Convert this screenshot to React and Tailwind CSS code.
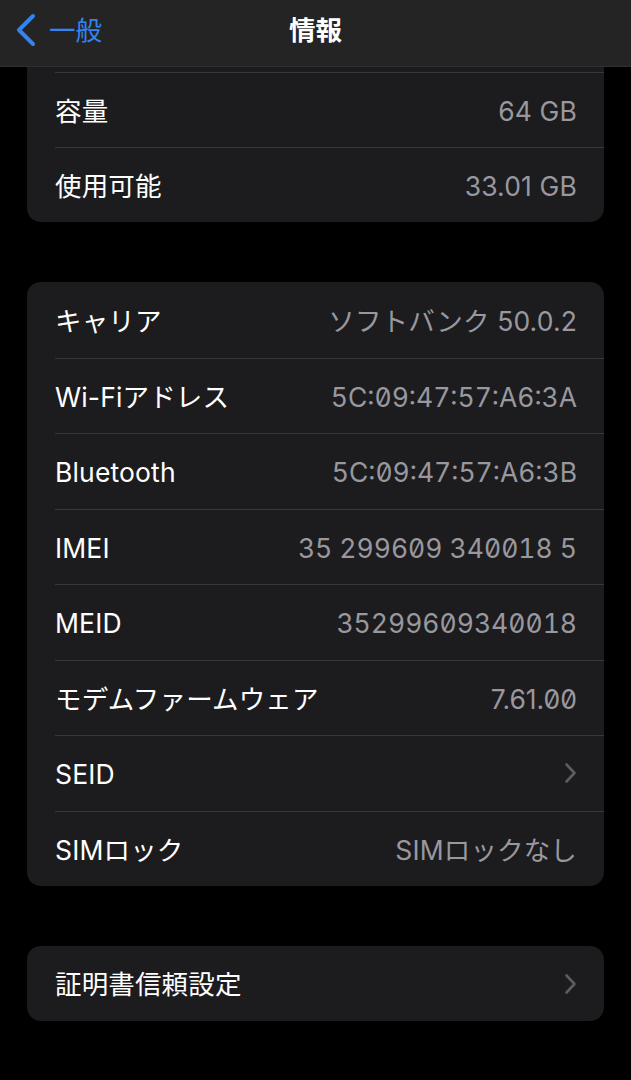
import React from "react";

const FONT = { fontFamily: 'Inter, "Noto Sans CJK JP", sans-serif' };

function Chevron() {
  return (
    <svg width="13" height="22" viewBox="0 0 13 22" fill="none">
      <path d="M2.5 2.5 L10.5 11 L2.5 19.5" stroke="#5c5c61" strokeWidth="2.6" strokeLinecap="round" strokeLinejoin="round" />
    </svg>
  );
}

function Row({ label, value, mono, zero, chevron, first, h = "h-[75.5px]" }) {
  const valueCls = mono
    ? "tabular-nums slashed-zero"
    : zero
    ? "slashed-zero"
    : "tracking-[0.15px]";
  return (
    <div className={`flex ${h} items-center pr-[27px] ${first ? "" : "border-t border-[#38383a]"}`}>
      <div className="flex-1 pt-[2px] text-[26.5px] text-white leading-none tracking-[0.15px]">{label}</div>
      {value && (
        <div className={`pt-[2px] text-[26.5px] leading-none text-[#98989e] ${valueCls}`}>
          {value}
        </div>
      )}
      {chevron && <Chevron />}
    </div>
  );
}

export default function App() {
  return (
    <div className="min-h-[1080px] bg-black" style={FONT}>
      <div className="relative flex h-[67px] items-center border-b border-[#2f2f2f] bg-[#242424] pb-[6px]">
        <div className="flex items-center pl-[14px]">
          <svg width="24" height="34" viewBox="0 0 24 34" fill="none">
            <path d="M19 3 L5 17 L19 31" stroke="#3384f0" strokeWidth="4" strokeLinecap="round" strokeLinejoin="round" />
          </svg>
          <span className="ml-[11px] text-[26.5px] leading-none text-[#3384f0]">一般</span>
        </div>
        <div className="pointer-events-none absolute left-0 right-0 top-0 flex h-[60px] items-center justify-center">
          <span className="text-[26.5px] font-bold leading-none text-white">情報</span>
        </div>
      </div>

      <div className="mx-[27px] rounded-b-[14px] bg-[#1c1c1e] pl-[28px]">
        <div className="h-[5px]" />
        <Row label="容量" value="64 GB" h="h-[75px]" />
        <Row label="使用可能" value="33.01 GB" h="h-[75px]" />
      </div>

      <div className="mx-[27px] mt-[60px] rounded-[14px] bg-[#1c1c1e] pl-[28px]">
        <Row first label="キャリア" value="ソフトバンク 50.0.2" />
        <Row label="Wi-Fiアドレス" value="5C:09:47:57:A6:3A" mono />
        <Row label="Bluetooth" value="5C:09:47:57:A6:3B" mono />
        <Row label="IMEI" value="35 299609 340018 5" mono />
        <Row label="MEID" value="35299609340018" mono />
        <Row label="モデムファームウェア" value="7.61.00" zero />
        <Row label="SEID" chevron />
        <Row label="SIMロック" value="SIMロックなし" />
      </div>

      <div className="mx-[27px] mt-[60px] rounded-[14px] bg-[#1c1c1e] pl-[28px]">
        <Row first label="証明書信頼設定" chevron h="h-[75px]" />
      </div>
    </div>
  );
}
